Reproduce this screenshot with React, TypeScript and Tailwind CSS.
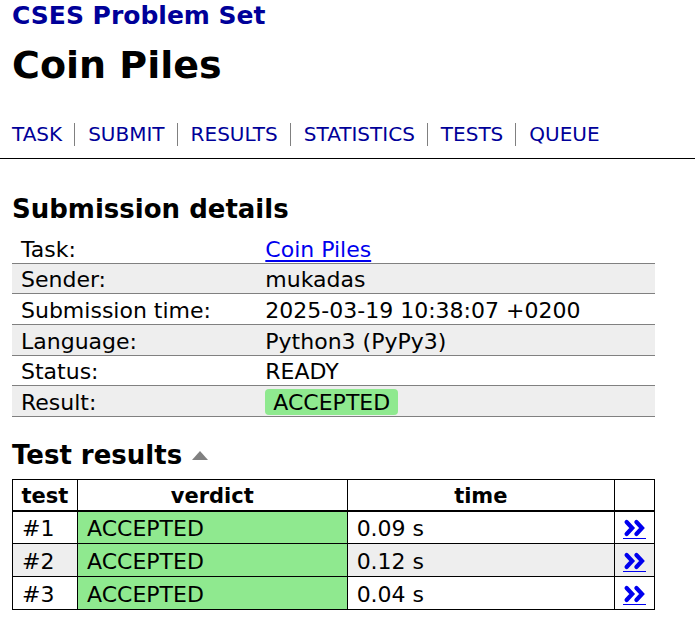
import type { ReactNode } from "react";

const navItems = ["TASK", "SUBMIT", "RESULTS", "STATISTICS", "TESTS", "QUEUE"];

const details: { label: string; value: ReactNode }[] = [
  {
    label: "Task:",
    value: (
      <a href="#task" className="text-[#0000ee] underline decoration-2 underline-offset-3">
        Coin Piles
      </a>
    ),
  },
  { label: "Sender:", value: "mukadas" },
  { label: "Submission time:", value: "2025-03-19 10:38:07 +0200" },
  { label: "Language:", value: "Python3 (PyPy3)" },
  { label: "Status:", value: "READY" },
  { label: "Result:", value: <span className="rounded bg-[#8fe98f] px-2 pt-px">ACCEPTED</span> },
];

const tests = [
  { id: 1, time: "0.09 s" },
  { id: 2, time: "0.12 s" },
  { id: 3, time: "0.04 s" },
];

function DoubleChevron() {
  return (
    <svg viewBox="0 0 22 18" className="block h-[18px] w-[22px]" fill="none" stroke="currentColor" strokeWidth="4.2" aria-hidden="true">
      <path d="M3.6 3 L9.2 9 L3.6 15" strokeLinecap="round" />
      <path d="M13.4 3 L19 9 L13.4 15" strokeLinecap="round" />
    </svg>
  );
}

export default function App() {
  return (
    <div className="bg-white font-['Verdana','DejaVu_Sans',sans-serif] text-[22px] leading-6 text-black">
      <header className="border-b border-black px-3 pb-3">
        <div className="text-[25px] leading-8 font-bold">
          <a href="#problemset" className="text-[#000099]">
            CSES Problem Set
          </a>
        </div>
        <h1 className="mt-2 text-[38px] leading-[50px] font-bold">Coin Piles</h1>
        <nav className="mt-[33px] flex text-[20px] leading-[23px]">
          {navItems.map((item, i) => (
            <a
              key={item}
              href={"#" + item.toLowerCase()}
              className={i === 0 ? "pr-3 text-[#000099]" : "border-l border-[#808080] pr-3 pl-[13px] text-[#000099]"}
            >
              {item}
            </a>
          ))}
        </nav>
      </header>

      <main className="pt-8 pr-10 pl-3">
        <h2 className="text-[26px] leading-9 font-bold">Submission details</h2>
        <table className="mt-1.5 h-[184px] w-full border-collapse">
          <tbody>
            {details.map((row) => (
              <tr key={row.label} className="border-b border-[#808080] even:bg-[#eeeeee]">
                <th scope="row" className="w-[38%] px-[9px] pt-1 text-left font-normal">
                  {row.label}
                </th>
                <td className="px-[9px] pt-1">{row.value}</td>
              </tr>
            ))}
          </tbody>
        </table>

        <h2 className="mt-5 flex items-center gap-2.5 text-[26px] leading-9 font-bold">
          Test results
          <button type="button" aria-label="Collapse test results" className="text-[#808080]">
            <svg viewBox="0 0 16 9" className="h-[9px] w-4" fill="currentColor" aria-hidden="true">
              <path d="M0 9 L8 0 L16 9 Z" />
            </svg>
          </button>
        </h2>
        <table className="mt-1.5 w-full table-fixed border-collapse border border-black">
          <colgroup>
            <col className="w-[65px]" />
            <col className="w-[42%]" />
            <col />
            <col className="w-10" />
          </colgroup>
          <thead>
            <tr className="h-[31px] border-b-2 border-black text-[21px]">
              <th className="border-r border-black pt-[3px]">test</th>
              <th className="border-r border-black pt-[3px]">verdict</th>
              <th className="border-r border-black pt-[3px]">time</th>
              <th />
            </tr>
          </thead>
          <tbody>
            {tests.map((test) => (
              <tr key={test.id} className="h-[33px] border-b border-black even:bg-[#eeeeee]">
                <td className="border-r border-black px-[9px] pt-[3px]">#{test.id}</td>
                <td className="border-r border-black bg-[#8fe98f] px-[9px] pt-[3px]">ACCEPTED</td>
                <td className="border-r border-black px-[9px] pt-[3px]">{test.time}</td>
                <td className="px-2 pt-[3px]">
                  <a href={"#test" + test.id} aria-label={"Details of test " + test.id} className="block w-[23px] border-b border-[#0000ee] pb-px text-[#0000ee]">
                    <DoubleChevron />
                  </a>
                </td>
              </tr>
            ))}
          </tbody>
        </table>
      </main>
    </div>
  );
}
